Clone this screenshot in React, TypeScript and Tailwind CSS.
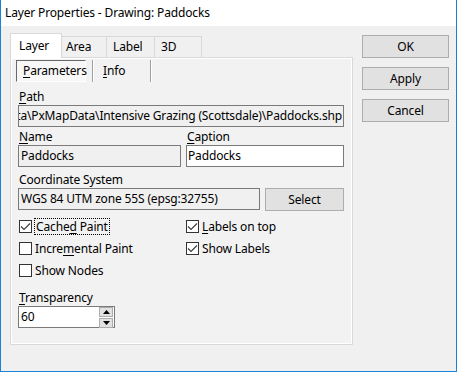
import React from "react";

const font = "font-['Noto_Sans',sans-serif]";

function Mn({ children }: { children: React.ReactNode }) {
  return <span className="underline underline-offset-[2px] decoration-1">{children}</span>;
}

function Check({ checked }: { checked?: boolean }) {
  return (
    <span className="w-[13px] h-[13px] border border-[#333333] bg-white flex items-center justify-center shrink-0">
      {checked && (
        <svg width="11" height="11" viewBox="0 0 11 11">
          <path d="M1 5.5 L4 8.5 L10 2.5" fill="none" stroke="#3c3c3c" strokeWidth="1.1" />
        </svg>
      )}
    </span>
  );
}

function CheckRow({ checked, children, focus }: { checked?: boolean; children: React.ReactNode; focus?: boolean }) {
  return (
    <div className="flex items-center h-[22px]">
      <Check checked={checked} />
      <span
        className={
          focus
            ? "ml-[2px] px-[1px] leading-[15px] border border-dotted border-black"
            : "ml-[3px] leading-[15px]"
        }
      >
        {children}
      </span>
    </div>
  );
}

function WinButton({ label, className }: { label: string; className?: string }) {
  return (
    <div
      className={
        "h-[23px] bg-[#e1e1e1] border border-[#adadad] flex items-center justify-center " + (className ?? "")
      }
    >
      {label}
    </div>
  );
}

function Arrow({ up }: { up?: boolean }) {
  return (
    <div className="h-[10px] w-[14px] bg-[#e1e1e1] border border-[#adadad] flex items-center justify-center">
      <svg width="7" height="4" viewBox="0 0 7 4">
        {up ? <path d="M0 4 L3.5 0 L7 4 Z" fill="#000" /> : <path d="M0 0 L7 0 L3.5 4 Z" fill="#000" />}
      </svg>
    </div>
  );
}

export default function App() {
  return (
    <div className={`${font} text-[12px] tracking-[-0.15px] text-black w-[457px] h-[372px] bg-[#f0f0f0] border-x border-b border-[#1883d7] flex flex-col`}>
      {/* title bar */}
      <div className="h-[26px] bg-white flex items-center pl-[4px] shrink-0">
        Layer Properties - Drawing: Paddocks
      </div>

      <div className="flex pl-[9px] pt-[7px]">
        {/* tab control */}
        <div className="w-[343px] flex flex-col">
          <div className="flex items-end h-[24px] relative z-10">
            <div className="h-[25px] w-[52px] -mb-px bg-white border-t border-x border-[#d9d9d9] pl-[8px] pt-[3px]">
              Layer
            </div>
            <div className="h-[21px] w-[45px] bg-[#f0f0f0] border-t border-r border-[#d9d9d9] pl-[4px] pt-px">
              Area
            </div>
            <div className="h-[21px] w-[48px] bg-[#f0f0f0] border-t border-r border-[#d9d9d9] pl-[6px] pt-px">
              Label
            </div>
            <div className="h-[21px] w-[47px] bg-[#f0f0f0] border-t border-r border-[#d9d9d9] pl-[6px] pt-px">
              3D
            </div>
          </div>

          <div className="h-[288px] border border-[#d9d9d9] bg-[#f2f2f2] shadow-[inset_1px_1px_0_#ffffff,inset_-1px_-1px_0_#ffffff] flex flex-col">
            {/* inner tabs */}
            <div className="flex items-stretch h-[22px] mt-[2px] ml-[5px]">
              <div className="w-[70px] border-t border-l border-[#696969] border-b border-r border-b-white border-r-white bg-[#f7f7f7] flex items-center pl-[6px]">
                <Mn>P</Mn>arameters
              </div>
              <div className="w-[6px]" />
              <div className="w-[2px] border-l border-[#a0a0a0] border-r border-r-white" />
              <div className="w-[56px] flex items-center pl-[9px]">
                <Mn>I</Mn>nfo
              </div>
              <div className="w-[2px] border-l border-[#a0a0a0] border-r border-r-white" />
            </div>

            <div className="ml-[7px] w-[326px] flex flex-col">
              <div className="mt-[7px] h-[16px] leading-[16px] pl-px">
                <Mn>P</Mn>ath
              </div>
              <div className="h-[22px] border border-[#7a7a7a] bg-[#f0f0f0] flex items-center justify-end overflow-hidden whitespace-nowrap pr-[1px]">
                C:\Data\PxMapData\Intensive Grazing (Scottsdale)\Paddocks.shp
              </div>

              <div className="mt-[2px] flex gap-[5px]">
                <div className="w-[163px] flex flex-col">
                  <div className="h-[16px] leading-[16px] pl-px">
                    <Mn>N</Mn>ame
                  </div>
                  <div className="h-[22px] border border-[#7a7a7a] bg-[#f0f0f0] flex items-center pl-[2px]">
                    Paddocks
                  </div>
                </div>
                <div className="w-[158px] flex flex-col">
                  <div className="h-[16px] leading-[16px] pl-px">
                    <Mn>C</Mn>aption
                  </div>
                  <div className="h-[22px] border border-[#7a7a7a] bg-white flex items-center pl-[1px]">
                    Paddocks
                  </div>
                </div>
              </div>

              <div className="mt-[5px] h-[16px] leading-[16px] pl-px">Coordinate System</div>
              <div className="flex gap-[5px]">
                <div className="w-[242px] h-[22px] border border-[#7a7a7a] bg-[#f0f0f0] flex items-center pl-[2px]">
                  WGS 84 UTM zone 55S (epsg:32755)
                </div>
                <WinButton label="Select" className="w-[79px] h-[22px]" />
              </div>

              <div className="mt-[4px] flex">
                <div className="w-[168px] pl-px flex flex-col">
                  <CheckRow checked focus>
                    Cache<Mn>d</Mn> Paint
                  </CheckRow>
                  <CheckRow>
                    Incre<Mn>m</Mn>ental Paint
                  </CheckRow>
                  <CheckRow>Show Nodes</CheckRow>
                </div>
                <div className="flex flex-col">
                  <CheckRow checked>
                    <Mn>L</Mn>abels on top
                  </CheckRow>
                  <CheckRow checked>Show Labels</CheckRow>
                </div>
              </div>

              <div className="mt-[9px] h-[16px] leading-[16px] pl-px">
                <Mn>T</Mn>ransparency
              </div>
              <div className="w-[97px] h-[22px] border border-[#7a7a7a] bg-white flex items-center pl-[2px]">
                <span className="flex-1">60</span>
                <div className="flex flex-col gap-[1px] mr-px">
                  <Arrow up />
                  <Arrow />
                </div>
              </div>
            </div>
          </div>
        </div>

        {/* dialog buttons */}
        <div className="ml-[9px] pt-[2px] w-[87px] flex flex-col gap-[9px]">
          <WinButton label="OK" />
          <WinButton label="Apply" />
          <WinButton label="Cancel" />
        </div>
      </div>
    </div>
  );
}
